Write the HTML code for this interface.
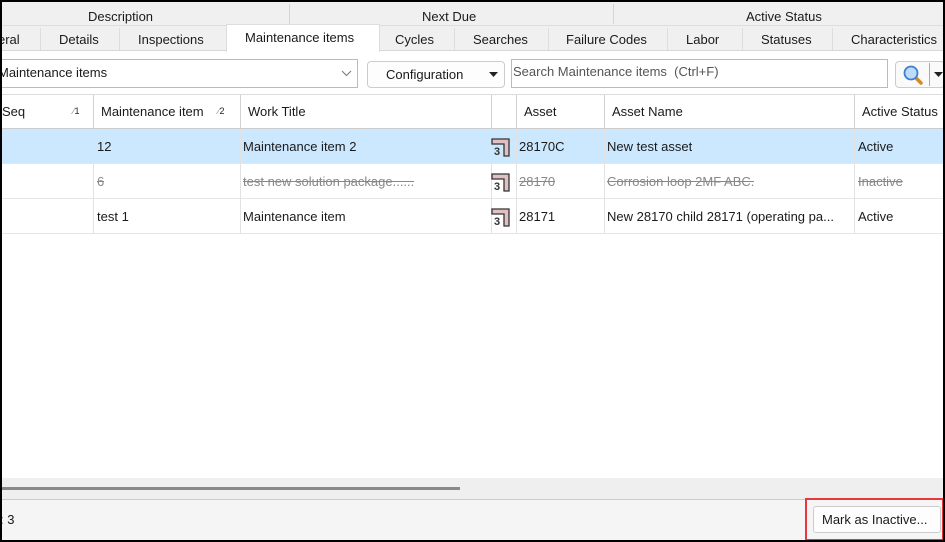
<!DOCTYPE html>
<html><head><meta charset="utf-8"><style>
*{box-sizing:border-box;margin:0;padding:0}
body{width:945px;height:542px;background:#000;font-family:"Liberation Sans",sans-serif;font-size:13px;color:#1a1a1a;position:relative;overflow:hidden}
#p{position:absolute;left:2px;top:2px;width:941px;height:538px;background:#fff;overflow:hidden}
.a{position:absolute}
.t{position:absolute;white-space:nowrap}
.hdr{background:#f0f0f0}
.cell{position:absolute;height:35px;line-height:35px;white-space:nowrap;overflow:hidden;padding-left:4px}
.strike{color:#888;text-decoration:line-through}
.vl{position:absolute;width:1px;background:#e2e2e2}
.hl{position:absolute;top:93px;width:1px;height:34px;background:#d0d0d0}
</style></head><body>
<div id="p">
<div class="a hdr" style="left:0;top:0;width:941px;height:24px;border-bottom:1px solid #ddd"></div>
<div class="t" style="left:86px;top:7px">Description</div>
<div class="a" style="left:287px;top:2px;width:1px;height:20px;background:#d4d4d4"></div>
<div class="t" style="left:420px;top:7px">Next Due</div>
<div class="a" style="left:611px;top:2px;width:1px;height:20px;background:#d4d4d4"></div>
<div class="t" style="left:744px;top:7px">Active Status</div>
<div class="a hdr" style="left:0;top:24px;width:941px;height:25px;border-bottom:1px solid #d8d8d8"></div>
<div class="t" style="left:-4px;top:30px">eral</div>
<div class="a" style="left:38px;top:26px;width:1px;height:22px;background:#ddd"></div>
<div class="t" style="left:57px;top:30px">Details</div>
<div class="a" style="left:117px;top:26px;width:1px;height:22px;background:#ddd"></div>
<div class="t" style="left:136px;top:30px">Inspections</div>
<div class="a" style="left:224px;top:22px;width:154px;height:28px;background:#fff;border:1px solid #ddd;border-bottom:none"></div>
<div class="t" style="left:243px;top:28px">Maintenance items</div>
<div class="t" style="left:393px;top:30px">Cycles</div>
<div class="a" style="left:452px;top:26px;width:1px;height:22px;background:#ddd"></div>
<div class="t" style="left:471px;top:30px">Searches</div>
<div class="a" style="left:546px;top:26px;width:1px;height:22px;background:#ddd"></div>
<div class="t" style="left:564px;top:30px">Failure Codes</div>
<div class="a" style="left:665px;top:26px;width:1px;height:22px;background:#ddd"></div>
<div class="t" style="left:684px;top:30px">Labor</div>
<div class="a" style="left:740px;top:26px;width:1px;height:22px;background:#ddd"></div>
<div class="t" style="left:759px;top:30px">Statuses</div>
<div class="a" style="left:830px;top:26px;width:1px;height:22px;background:#ddd"></div>
<div class="t" style="left:849px;top:30px">Characteristics</div>
<div class="a" style="left:-2px;top:57px;width:358px;height:29px;border:1px solid #bbb;background:#fff"></div>
<div class="t" style="left:-4px;top:63px">Maintenance items</div>
<svg class="a" style="left:339px;top:68px" width="11" height="7"><path d="M1 1L5.5 5.5L10 1" fill="none" stroke="#777"/></svg>
<div class="a" style="left:365px;top:59px;width:138px;height:27px;border:1px solid #ccc;border-radius:4px;background:#fdfdfd"></div>
<div class="t" style="left:384px;top:65px">Configuration</div>
<svg class="a" style="left:487px;top:70px" width="9" height="5"><path d="M0 0H9L4.5 5Z" fill="#222"/></svg>
<div class="a" style="left:509px;top:57px;width:377px;height:29px;border:1px solid #bbb;background:#fff"></div>
<div class="t" style="left:511px;top:62px;color:#555">Search Maintenance items&nbsp; (Ctrl+F)</div>
<div class="a" style="left:893px;top:59px;width:50px;height:27px;border:1px solid #ccc;border-radius:4px;background:#fafafa"></div>
<svg class="a" style="left:900px;top:62px" width="22" height="22"><line x1="13" y1="13" x2="19" y2="19" stroke="#d08a2a" stroke-width="3.5" stroke-linecap="round"/><circle cx="9" cy="9" r="6.5" fill="#bcdcf8" stroke="#3b7fd0" stroke-width="1.8"/></svg>
<div class="a" style="left:927px;top:61px;width:1px;height:23px;background:#aaa"></div>
<svg class="a" style="left:932px;top:70px" width="9" height="5"><path d="M0 0H9L4.5 5Z" fill="#222"/></svg>
<div class="a" style="left:0;top:92px;width:941px;height:35px;background:#fff;border-top:1px solid #ddd;border-bottom:1px solid #ccc"></div>
<div class="hl" style="left:91px"></div>
<div class="hl" style="left:238px"></div>
<div class="hl" style="left:489px"></div>
<div class="hl" style="left:514px"></div>
<div class="hl" style="left:602px"></div>
<div class="hl" style="left:852px"></div>
<div class="t" style="left:0;top:102px">Seq</div>
<div class="t" style="left:71px;top:104px;font-size:9px;color:#888">&#8725;<span style="color:#222">1</span></div>
<div class="t" style="left:99px;top:102px">Maintenance item</div>
<div class="t" style="left:216px;top:104px;font-size:9px;color:#888">&#8725;<span style="color:#222">2</span></div>
<div class="t" style="left:246px;top:102px">Work Title</div>
<div class="t" style="left:522px;top:102px">Asset</div>
<div class="t" style="left:610px;top:102px">Asset Name</div>
<div class="t" style="left:860px;top:102px">Active Status</div>
<div class="a" style="left:0;top:127px;width:941px;height:35px;background:#cce8ff"></div>
<div class="a" style="left:0;top:196px;width:941px;height:1px;background:#e6e6e6"></div>
<div class="a" style="left:0;top:161px;width:941px;height:1px;background:#e6e6e6"></div>
<div class="a" style="left:0;top:231px;width:941px;height:1px;background:#e6e6e6"></div>
<div class="vl" style="left:91px;top:127px;height:105px"></div>
<div class="vl" style="left:238px;top:127px;height:105px"></div>
<div class="vl" style="left:489px;top:127px;height:105px"></div>
<div class="vl" style="left:514px;top:127px;height:105px"></div>
<div class="vl" style="left:602px;top:127px;height:105px"></div>
<div class="vl" style="left:852px;top:127px;height:105px"></div>
<div class="cell" style="left:91px;top:127px">12</div>
<div class="cell" style="left:237px;top:127px">Maintenance item 2</div>
<div class="cell" style="left:513px;top:127px">28170C</div>
<div class="cell" style="left:601px;top:127px">New test asset</div>
<div class="cell" style="left:852px;top:127px">Active</div>
<div class="cell strike" style="left:91px;top:162px">6</div>
<div class="cell strike" style="left:237px;top:162px">test new solution package......</div>
<div class="cell strike" style="left:513px;top:162px">28170</div>
<div class="cell strike" style="left:601px;top:162px">Corrosion loop 2MF ABC.</div>
<div class="cell strike" style="left:852px;top:162px">Inactive</div>
<div class="cell" style="left:91px;top:197px">test 1</div>
<div class="cell" style="left:237px;top:197px">Maintenance item</div>
<div class="cell" style="left:513px;top:197px">28171</div>
<div class="cell" style="left:601px;top:197px;width:250px">New 28170 child 28171 (operating pa...</div>
<div class="cell" style="left:852px;top:197px">Active</div>
<svg class="a" style="left:488px;top:135px" width="22" height="20"><path d="M2 2H19V19H14V7H2Z" fill="#e0c0c0" stroke="#333" stroke-width="1.3"/><text x="4" y="18" font-size="11" font-family="Liberation Sans" font-weight="bold" fill="#333">3</text></svg>
<svg class="a" style="left:488px;top:170px" width="22" height="20"><path d="M2 2H19V19H14V7H2Z" fill="#e0c0c0" stroke="#333" stroke-width="1.3"/><text x="4" y="18" font-size="11" font-family="Liberation Sans" font-weight="bold" fill="#333">3</text></svg>
<svg class="a" style="left:488px;top:205px" width="22" height="20"><path d="M2 2H19V19H14V7H2Z" fill="#e0c0c0" stroke="#333" stroke-width="1.3"/><text x="4" y="18" font-size="11" font-family="Liberation Sans" font-weight="bold" fill="#333">3</text></svg>
<div class="a" style="left:0;top:476px;width:941px;height:21px;background:#efefef"></div>
<div class="a" style="left:0;top:485px;width:458px;height:3px;background:#888"></div>
<div class="a" style="left:0;top:497px;width:941px;height:41px;background:#f5f5f5;border-top:1px solid #ccc"></div>
<div class="t" style="left:-2px;top:510px">: 3</div>
<div class="a" style="left:811px;top:504px;width:128px;height:27px;border:1px solid #ccc;border-radius:3px;background:#fdfdfd"></div>
<div class="t" style="left:820px;top:510px">Mark as Inactive...</div>
<div class="a" style="left:803px;top:496px;width:139px;height:43px;border:2px solid #e8383d"></div>
</div>
</body></html>
